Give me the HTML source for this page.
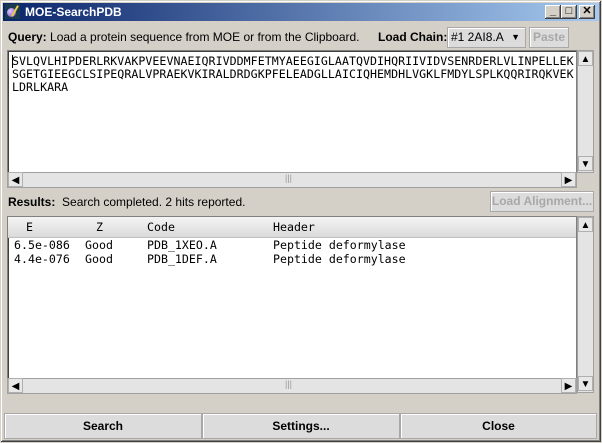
<!DOCTYPE html>
<html><head><style>
*{box-sizing:border-box;margin:0;padding:0}
body{width:602px;height:443px;background:#d4d0c8;font-family:"Liberation Sans",sans-serif;font-size:12px;position:relative;overflow:hidden}
.win{position:absolute;left:0;top:0;width:602px;height:443px;border:1px solid #d4d0c8;box-shadow:inset -1px -1px #404040,inset 1px 1px #fff,inset -2px -2px #808080;background:#d4d0c8}
.title{position:absolute;left:3px;top:3px;width:596px;height:18px;background:linear-gradient(90deg,#0a246a,#a6caf0);color:#fff;font-weight:bold;font-size:12px;line-height:18px;padding-left:22px}
.tb{position:absolute;top:5px;width:16px;height:14px;background:#d4d0c8;box-shadow:inset -1px -1px #404040,inset 1px 1px #fff,inset -2px -2px #808080;font-size:11px;line-height:13px;text-align:center;color:#000;font-weight:bold}
.abs{position:absolute}
.mono{font-family:"DejaVu Sans Mono",monospace;font-size:11.6px;position:absolute;line-height:14px;white-space:pre}
.sunk{background:#fff;border:1px solid #808080;box-shadow:inset 1px 1px #404040}
.sb{background:#e4e4e4;border:1px solid #a0a0a0}
.btn{position:absolute;background:#dcdcdc;border:1px solid #a8a8a8;box-shadow:inset 1px 1px #fff;text-align:center;font-weight:bold}
.arr{position:absolute;width:15px;height:15px;font-size:10px;line-height:15px;text-align:center;background:#e8e8e8;border:1px solid #b0b0b0}
</style></head><body>
<div class="win"></div>
<div class="title">MOE-SearchPDB</div>
<div class="abs" style="left:5px;top:4px;width:15px;height:15px;background:#1a3a50"><div style="position:absolute;left:2px;top:4px;width:9px;height:9px;border-radius:50%;background:radial-gradient(circle at 35% 35%,#e0c8ff,#7040c0)"></div><div style="position:absolute;left:9px;top:1px;width:2px;height:12px;background:#e8d040;transform:rotate(30deg)"></div></div>
<div class="tb" style="left:545px">_</div><div class="tb" style="left:561px">□</div><div class="tb" style="left:579px">✕</div>

<div class="abs" style="left:8px;top:30px;line-height:14px"><b>Query:</b> Load a protein sequence from MOE or from the Clipboard.</div>
<div class="abs" style="left:378px;top:30px;line-height:14px;font-weight:bold">Load Chain:</div>
<div class="btn" style="left:447px;top:27px;width:79px;height:21px;font-weight:normal;text-align:left;padding-left:3px;line-height:19px">#1 2AI8.A<span style="position:absolute;right:5px;font-size:9px">▼</span></div>
<div class="btn" style="left:529px;top:27px;width:40px;height:21px;color:#a8a8a8;line-height:19px">Paste</div>

<div class="abs sunk" style="left:7px;top:50px;width:570px;height:123px"></div>
<div class="mono" style="left:12px;top:55px;line-height:13px;letter-spacing:0.04px">SVLQVLHIPDERLRKVAKPVEEVNAEIQRIVDDMFETMYAEEGIGLAATQVDIHQRIIVIDVSENRDERLVLINPELLEK
SGETGIEEGCLSIPEQRALVPRAEKVKIRALDRDGKPFELEADGLLAICIQHEMDHLVGKLFMDYLSPLKQQRIRQKVEK
LDRLKARA</div>
<div class="abs" style="left:12px;top:55px;width:1px;height:13px;background:#000"></div>
<div class="abs sb" style="left:577px;top:50px;width:17px;height:123px"></div>
<div class="arr" style="left:578px;top:51px">▲</div><div class="arr" style="left:578px;top:156px">▼</div>
<div class="abs sb" style="left:7px;top:172px;width:570px;height:16px"></div>
<div class="arr" style="left:8px;top:172px">◀</div><div class="arr" style="left:561px;top:172px">▶</div>
<div class="abs" style="left:285px;top:173px;font-size:9px;color:#999">|||</div>

<div class="abs" style="left:8px;top:195px;line-height:14px"><b>Results:</b>&nbsp; Search completed. 2 hits reported.</div>
<div class="btn" style="left:490px;top:191px;width:104px;height:21px;color:#a8a8a8;line-height:19px">Load Alignment...</div>

<div class="abs sunk" style="left:7px;top:216px;width:570px;height:163px"></div>
<div class="abs" style="left:8px;top:217px;width:568px;height:21px;background:linear-gradient(#f4f4f4,#dadada);border-bottom:1px solid #c0c0c0"></div>
<div class="mono" style="left:26px;top:220px">E</div>
<div class="mono" style="left:96px;top:220px">Z</div>
<div class="mono" style="left:147px;top:220px">Code</div>
<div class="mono" style="left:273px;top:220px">Header</div>
<div class="mono" style="left:14px;top:238px">6.5e-086
4.4e-076</div>
<div class="mono" style="left:85px;top:238px">Good
Good</div>
<div class="mono" style="left:147px;top:238px">PDB_1XEO.A
PDB_1DEF.A</div>
<div class="mono" style="left:273px;top:238px">Peptide deformylase
Peptide deformylase</div>
<div class="abs sb" style="left:577px;top:216px;width:17px;height:177px"></div>
<div class="arr" style="left:578px;top:217px">▲</div><div class="arr" style="left:578px;top:376px">▼</div>
<div class="abs sb" style="left:7px;top:378px;width:570px;height:16px"></div>
<div class="arr" style="left:8px;top:378px">◀</div><div class="arr" style="left:561px;top:378px">▶</div>
<div class="abs" style="left:285px;top:379px;font-size:9px;color:#999">|||</div>

<div class="btn" style="left:4px;top:413px;width:198px;height:26px;line-height:25px">Search</div>
<div class="btn" style="left:202px;top:413px;width:198px;height:26px;line-height:25px">Settings...</div>
<div class="btn" style="left:400px;top:413px;width:197px;height:26px;line-height:25px">Close</div>
</body></html>
